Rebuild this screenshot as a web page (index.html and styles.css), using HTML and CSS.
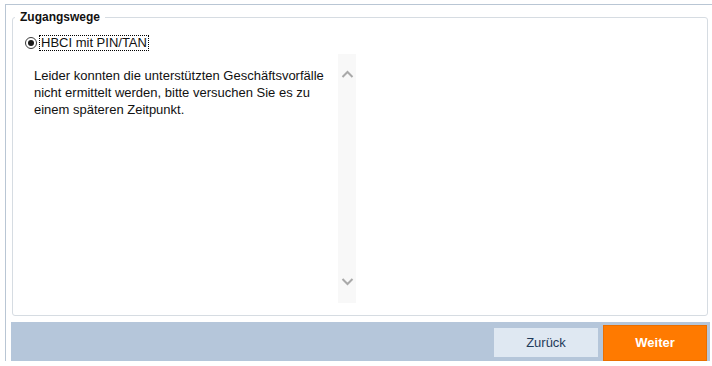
FILE: index.html
```html
<!DOCTYPE html>
<html lang="de">
<head>
<meta charset="utf-8">
<title>Zugangswege</title>
<link rel="stylesheet" href="styles.css">
</head>
<body>
<div class="frame">
  <fieldset class="group">
    <legend class="group-title">Zugangswege</legend>
    <label class="option">
      <span class="radio"><span class="radio-dot"></span></span>
      <span class="option-text">HBCI mit PIN/TAN</span>
    </label>
    <div class="panel">
      <p class="message">Leider konnten die unterstützten Geschäftsvorfälle nicht ermittelt werden, bitte versuchen Sie es zu einem späteren Zeitpunkt.</p>
      <div class="scrollbar">
        <svg class="chev" width="18" height="8" viewBox="0 0 18 8"><polyline points="4.5,7 9.5,2 14.5,7" fill="none" stroke="#a9a9a9" stroke-width="2"/></svg>
        <svg class="chev" width="18" height="8" viewBox="0 0 18 8"><polyline points="4.5,1 9.5,6 14.5,1" fill="none" stroke="#a9a9a9" stroke-width="2"/></svg>
      </div>
    </div>
  </fieldset>
  <div class="actions">
    <button class="btn btn-back" type="button">Zurück</button>
    <button class="btn btn-next" type="button">Weiter</button>
  </div>
</div>
</body>
</html>
```
FILE: styles.css
```css
html, body {
  margin: 0;
  padding: 0;
  background: #ffffff;
  font-family: "Liberation Sans", Arial, sans-serif;
  color: #111;
}

.frame {
  margin: 4px 0 0 5px;
  border-left: 1px solid #b9c6d4;
  border-top: 1px solid #b9c6d4;
  padding: 5px 0 3px 5px;
  height: 357px;
  box-sizing: border-box;
}

.group {
  margin: 0 4px 0 1px;
  padding: 0 0 12px 0;
  border: 1px solid #d6dce2;
  border-radius: 3px;
  min-width: 0;
}

.group-title {
  margin-left: 2px;
  padding: 0 5px;
  font-size: 12px;
  line-height: 14px;
  font-weight: bold;
  color: #111;
}

.option {
  display: flex;
  align-items: center;
  margin: 11px 0 0 12px;
  height: 16px;
}

.radio {
  width: 10px;
  height: 10px;
  border: 1px solid #3a3a3a;
  border-radius: 50%;
  display: flex;
  align-items: center;
  justify-content: center;
  background: #fff;
}

.radio-dot {
  width: 6px;
  height: 6px;
  border-radius: 50%;
  background: #1a1a1a;
}

.option-text {
  margin-left: 3px;
  font-size: 13px;
  line-height: 14px;
  padding: 0 1px;
  outline: 1px dotted #000;
  color: #111;
}

.panel {
  display: flex;
  margin: 3px 0 0 13px;
  width: 330px;
  height: 249px;
}

.message {
  margin: 0;
  padding: 13px 0 0 8px;
  width: 304px;
  font-size: 13px;
  line-height: 17px;
  color: #111;
}

.scrollbar {
  width: 18px;
  background: #f8f8f8;
  display: flex;
  flex-direction: column;
  justify-content: space-between;
  padding: 16px 0 17px;
  box-sizing: border-box;
}

.chev {
  display: block;
}

.actions {
  display: flex;
  align-items: center;
  justify-content: flex-end;
  gap: 5px;
  margin: 6px 2px 0 0;
  height: 41px;
  padding-right: 3px;
  background: #b5c6da;
}

.btn {
  font-family: "Liberation Sans", Arial, sans-serif;
  font-size: 13px;
  width: 104px;
  cursor: pointer;
  margin: 0;
}

.btn-back {
  height: 29px;
  border: none;
  background: #dfe8f2;
  color: #1f3b5a;
}

.btn-next {
  height: 36px;
  border: 1px solid #ea6f00;
  background: #ff7a00;
  color: #ffffff;
  font-weight: bold;
}
```
